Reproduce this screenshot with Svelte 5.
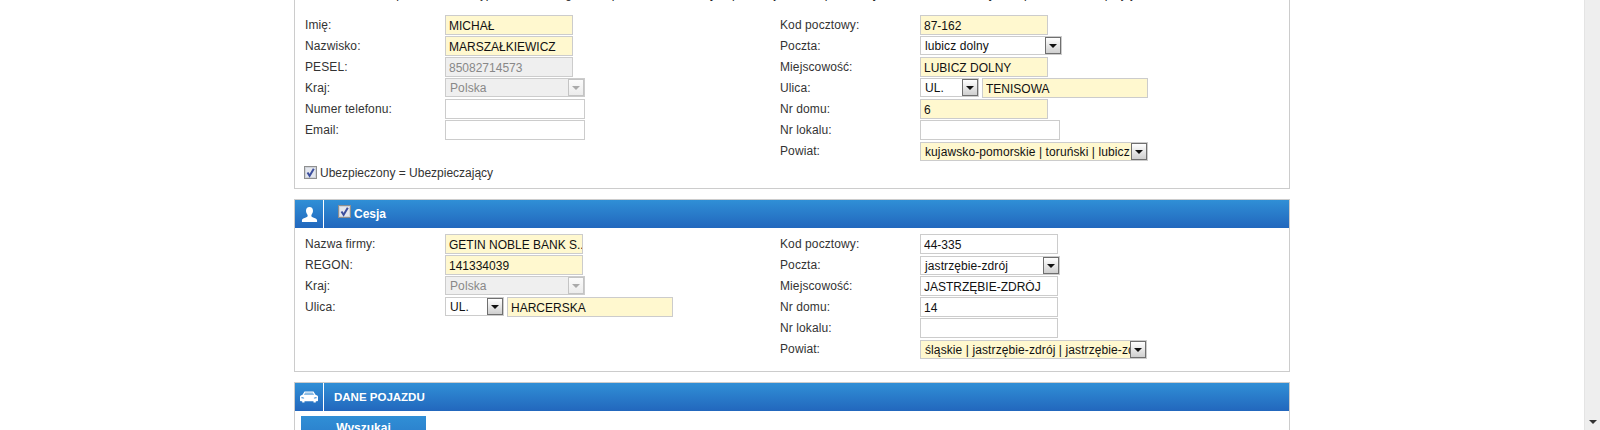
<script>
  let osoba = [
    { label: "Imię:", value: "MICHAŁ", cls: "req" },
    { label: "Nazwisko:", value: "MARSZAŁKIEWICZ", cls: "req" },
    { label: "PESEL:", value: "85082714573", cls: "off" },
    { label: "Kraj:", select: "Polska", cls: "off wide" },
    { label: "Numer telefonu:", value: "", cls: "wide" },
    { label: "Email:", value: "", cls: "wide" },
  ];
  let adres = [
    { label: "Kod pocztowy:", value: "87-162", cls: "req" },
    { label: "Poczta:", select: "lubicz dolny", cls: "wide" },
    { label: "Miejscowość:", value: "LUBICZ DOLNY", cls: "req" },
    { label: "Ulica:", street: "TENISOWA" },
    { label: "Nr domu:", value: "6", cls: "req" },
    { label: "Nr lokalu:", value: "", cls: "wide" },
    { label: "Powiat:", select: "kujawsko-pomorskie | toruński | lubicz", cls: "req long" },
  ];
  let firma = [
    { label: "Nazwa firmy:", value: "GETIN NOBLE BANK S..", cls: "req mid" },
    { label: "REGON:", value: "141334039", cls: "req mid" },
    { label: "Kraj:", select: "Polska", cls: "off wide" },
    { label: "Ulica:", street: "HARCERSKA" },
  ];
  let adresFirmy = [
    { label: "Kod pocztowy:", value: "44-335", cls: "mid" },
    { label: "Poczta:", select: "jastrzębie-zdrój", cls: "wide" },
    { label: "Miejscowość:", value: "JASTRZĘBIE-ZDRÓJ", cls: "mid" },
    { label: "Nr domu:", value: "14", cls: "mid" },
    { label: "Nr lokalu:", value: "", cls: "mid" },
    { label: "Powiat:", select: "śląskie | jastrzębie-zdrój | jastrzębie-zdrój", cls: "req long" },
  ];
</script>

{#snippet tick()}
  <svg class="tick" width="13" height="13" viewBox="0 0 13 13">
    <rect x="0.5" y="0.5" width="12" height="12" fill="#d9dde5" stroke="#8f8f8f" />
    <rect x="1.5" y="1.5" width="10" height="10" fill="#e4e7ee" stroke="#cfd3da" />
    <path d="M3.500 6.500 L5.600 9.800 L9.800 2.800" fill="none" stroke="#3d4f9e" stroke-width="2" />
  </svg>
{/snippet}

{#snippet arrow(off)}
  <span class="btn" class:dim={off}><i></i></span>
{/snippet}

{#snippet drop(text, cls)}
  <div class="select {cls}">
    <span class="txt">{text}</span>
    {@render arrow(cls.includes("off"))}
  </div>
{/snippet}

{#snippet column(rows)}
  <div class="col">
    {#each rows as r}
      <div class="row">
        <span class="lab">{r.label}</span>
        {#if r.select}
          {@render drop(r.select, r.cls)}
        {:else if r.street}
          {@render drop("UL.", "short")}
          <input class="req street" value={r.street} />
        {:else}
          <input class={r.cls} value={r.value} readonly={r.cls === "off"} />
        {/if}
      </div>
    {/each}
  </div>
{/snippet}

<div class="page">
  <main>
    <section class="panel first">
      <p class="intro">
        Oświadczam, że podane dane są prawdziwe, a zgoda na przetwarzanie danych pozostaje ważna przez cały okres trwania umowy ubezpieczenia oraz po jej zakończeniu.
      </p>
      <div class="cols">
        {@render column(osoba)}
        {@render column(adres)}
      </div>
      <label class="same">
        {@render tick()}
        <span>Ubezpieczony = Ubezpieczający</span>
      </label>
    </section>

    <section class="panel">
      <header>
        <span class="ico">
          <svg width="17" height="17" viewBox="0 0 18 18">
            <path fill="#fff" d="M9 1c2.400 0 3.700 1.800 3.700 4.100 0 1.800-.8 3.400-1.700 4.300v1.300c0 .9 1 1.200 2.500 1.800 2 .8 3.500 1.300 3.500 2.600V17H1v-1.900c0-1.300 1.500-1.800 3.500-2.600C6 11.900 7 11.600 7 10.700V9.400C6.100 8.500 5.300 6.900 5.300 5.100 5.300 2.800 6.600 1 9 1z" />
          </svg>
        </span>
        <span class="title cesja">{@render tick()} Cesja</span>
      </header>
      <div class="cols second">
        {@render column(firma)}
        {@render column(adresFirmy)}
      </div>
    </section>

    <section class="panel last">
      <header>
        <span class="ico">
          <svg width="18" height="12" viewBox="0 0 18 12">
            <path fill="#fff" d="M4.500 0.500h9l2 3.300 1.700.7c.5.3.8.7.8 1.300v3.700c0 .5-.3.8-.8.8H15.800v1.200h-2.300v-1.200h-9v1.200H2.200v-1.200H.8c-.5 0-.8-.3-.8-.8V5.800c0-.6.3-1 .8-1.300l1.700-.7z" />
            <path fill="#2f86d0" fill-opacity="0.55" d="M5.200 1.600h7.600l1.400 2.400H3.800z" />
            <path fill="#2f86d0" d="M1.500 6l2.600.7v.9l-2.600-.3zM16.500 6l-2.600.7v.9l2.600-.3z" />
          </svg>
        </span>
        <span class="title">DANE POJAZDU</span>
      </header>
      <button class="search">Wyszukaj</button>
    </section>
  </main>

  <aside class="scroll"><i></i></aside>
</div>

<style>
  :global(body) {
    margin: 0;
    background: #fff;
  }
  .page {
    display: flex;
    height: 430px;
    overflow: hidden;
    font-family: "Liberation Sans", Arial, sans-serif;
    font-size: 12px;
    color: #333;
  }
  main {
    flex: 1;
    min-width: 0;
  }
  .panel {
    width: 994px;
    margin: 0 auto 10px;
    border: 1px solid #ccc;
  }
  .first {
    margin-top: -14px;
    height: 201px;
  }
  .intro {
    margin: 0 0 0 10px;
    height: 15px;
    line-height: 15px;
    white-space: nowrap;
    overflow: hidden;
    width: 970px;
    color: #222;
  }
  .cols {
    display: flex;
    padding: 13px 0 0 10px;
  }
  .second {
    padding-top: 6px;
    height: 137px;
  }
  .col {
    display: flex;
    flex-direction: column;
    gap: 1px;
    width: 475px;
  }
  .row {
    display: flex;
    height: 20px;
    align-items: flex-start;
  }
  .lab {
    width: 140px;
    flex: none;
    line-height: 20px;
    letter-spacing: 0.1px;
  }
  input {
    box-sizing: border-box;
    width: 140px;
    height: 20px;
    margin: 0;
    padding: 1px 3px 0;
    border: 1px solid #ccc;
    border-radius: 0;
    outline: none;
    background: #fff;
    font: 12px "Liberation Sans", Arial, sans-serif;
    color: #111;
  }
  input.req {
    width: 128px;
    background: #fff8cf;
  }
  input.off {
    width: 128px;
    background: #efefef;
    color: #888;
  }
  input.mid {
    width: 138px;
  }
  input.req.mid {
    width: 138px;
    padding-right: 0;
  }
  input.req.street {
    width: 166px;
    margin-left: 3px;
  }
  .select {
    box-sizing: border-box;
    display: flex;
    align-items: center;
    width: 142px;
    height: 19px;
    border: 1px solid #ccc;
    background: #fff;
    color: #111;
    overflow: hidden;
    letter-spacing: 0.1px;
  }
  .select.off {
    width: 140px;
    background: #efefef;
    color: #888;
  }
  .select.req {
    background: #fff8cf;
  }
  .select.long {
    width: 228px;
    margin-top: 1px;
  }
  .select.short {
    width: 59px;
  }
  .second .col + .col .select {
    width: 140px;
    margin-top: 1px;
  }
  .second .col + .col .select.long {
    width: 227px;
  }
  .txt {
    flex: 1;
    min-width: 0;
    padding-left: 4px;
    white-space: nowrap;
    overflow: hidden;
  }
  .btn {
    box-sizing: border-box;
    flex: none;
    display: flex;
    align-items: center;
    justify-content: center;
    width: 16px;
    height: 17px;
    border: 1px solid #6f6f6f;
    background: linear-gradient(#fff, #cfcfcf);
  }
  .btn.dim {
    border-color: #c4c4c4;
    background: linear-gradient(#fbfbfb, #ececec);
  }
  .btn i {
    width: 0;
    height: 0;
    border-left: 4px solid transparent;
    border-right: 4px solid transparent;
    border-top: 4px solid #111;
  }
  .btn.dim i {
    border-top-color: #aaa;
  }
  .same {
    display: flex;
    align-items: center;
    gap: 3px;
    margin: 3px 0 0 9px;
    height: 16px;
  }
  .same span {
    margin-top: 2px;
  }
  .tick {
    flex: none;
  }
  header {
    display: flex;
    align-items: stretch;
    height: 28px;
    background: linear-gradient(#308fd6, #2267bd);
    color: #fff;
    font-weight: bold;
  }
  .ico {
    flex: none;
    width: 28px;
    display: flex;
    align-items: center;
    justify-content: center;
    border-right: 1px solid #fff;
  }
  .title {
    display: flex;
    align-items: center;
    padding-left: 10px;
    font-size: 11.5px;
  }
  .cesja {
    gap: 3px;
    padding-left: 14px;
    font-size: 12px;
  }
  .cesja .tick {
    margin-top: -6px;
  }
  .last {
    height: 100px;
  }
  .search {
    display: block;
    width: 125px;
    height: 24px;
    margin: 5px 0 0 6px;
    padding: 0;
    border: 0;
    background: linear-gradient(#308fd6, #2a7cc9);
    color: #fff;
    font: bold 12px "Liberation Sans", Arial, sans-serif;
  }
  .scroll {
    flex: none;
    width: 16px;
    box-sizing: border-box;
    border-left: 1px solid #e4e4e4;
    background: #eee;
    position: relative;
  }
  .scroll i {
    position: absolute;
    left: 4px;
    top: 420px;
    width: 0;
    height: 0;
    border-left: 4px solid transparent;
    border-right: 4px solid transparent;
    border-top: 4px solid #333;
  }
</style>
